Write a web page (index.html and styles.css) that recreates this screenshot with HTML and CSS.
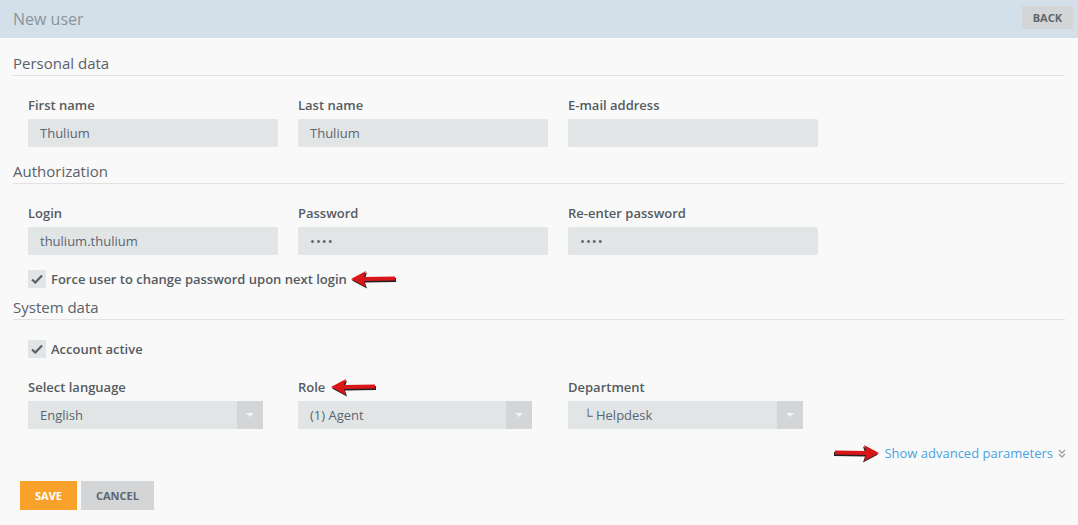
FILE: index.html
```html
<!DOCTYPE html>
<html lang="en">
<head>
    <meta charset="UTF-8">
    <title>New user</title>
    <link rel="stylesheet" href="styles.css">
</head>
<body>

<div class="topbar">
    <h1 class="page-title">New user</h1>
    <button class="btn btn-grey btn-back">BACK</button>
</div>

<form class="user-form">
    <h2 class="section-title section-first">Personal data</h2>
    <div class="row">
        <div class="field">
            <label>First name</label>
            <input type="text" value="Thulium">
        </div>
        <div class="field">
            <label>Last name</label>
            <input type="text" value="Thulium">
        </div>
        <div class="field">
            <label>E-mail address</label>
            <input type="text" value="">
        </div>
    </div>

    <h2 class="section-title">Authorization</h2>
    <div class="row">
        <div class="field">
            <label>Login</label>
            <input type="text" value="thulium.thulium">
        </div>
        <div class="field">
            <label>Password</label>
            <input type="password" value="abcd">
        </div>
        <div class="field">
            <label>Re-enter password</label>
            <input type="password" value="abcd">
        </div>
    </div>
    <div class="check-row check-force">
        <span class="checkbox"><svg width="12" height="10" viewBox="0 0 12 10"><path d="M1 5.5 L4.3 8.5 L11 1.5" fill="none" stroke="#55606a" stroke-width="2.2"/></svg></span>
        <span class="check-label">Force user to change password upon next login</span>
        <svg class="arrow arrow-force" width="48" height="20" viewBox="0 0 48 20"><path d="M2 10 L17 2 L15 8 L46 7.5 L46 11.5 L15 12 L17 18 Z" fill="#222" transform="translate(1,1.5)"/><path d="M2 10 L17 2 L15 8 L46 7.5 L46 11.5 L15 12 L17 18 Z" fill="#d9161a"/></svg>
    </div>

    <h2 class="section-title section-tight">System data</h2>
    <div class="check-row check-active">
        <span class="checkbox"><svg width="12" height="10" viewBox="0 0 12 10"><path d="M1 5.5 L4.3 8.5 L11 1.5" fill="none" stroke="#55606a" stroke-width="2.2"/></svg></span>
        <span class="check-label">Account active</span>
    </div>
    <div class="row row-selects">
        <div class="field">
            <label>Select language</label>
            <div class="select">
                <span class="select-value">English</span>
                <span class="select-arrow"></span>
            </div>
        </div>
        <div class="field">
            <label>Role <svg class="arrow" width="48" height="20" viewBox="0 0 48 20"><path d="M2 10 L17 2 L15 8 L46 7.5 L46 11.5 L15 12 L17 18 Z" fill="#222" transform="translate(1,1.5)"/><path d="M2 10 L17 2 L15 8 L46 7.5 L46 11.5 L15 12 L17 18 Z" fill="#d9161a"/></svg></label>
            <div class="select">
                <span class="select-value">(1) Agent</span>
                <span class="select-arrow"></span>
            </div>
        </div>
        <div class="field">
            <label>Department</label>
            <div class="select">
                <span class="select-value">&nbsp;└ Helpdesk</span>
                <span class="select-arrow"></span>
            </div>
        </div>
    </div>

    <div class="advanced">
        <svg class="arrow" width="48" height="20" viewBox="0 0 48 20"><path d="M46 10 L31 2 L33 8 L2 7.5 L2 11.5 L33 12 L31 18 Z" fill="#222" transform="translate(-1,1.5)"/><path d="M46 10 L31 2 L33 8 L2 7.5 L2 11.5 L33 12 L31 18 Z" fill="#d9161a"/></svg>
        <a href="#" class="advanced-link">Show advanced parameters</a>
        <svg class="chevrons" width="8" height="9" viewBox="0 0 8 9"><path d="M1 1 L4 4 L7 1 M1 5 L4 8 L7 5" fill="none" stroke="#9aa2a8" stroke-width="1.4"/></svg>
    </div>

    <div class="actions">
        <button type="button" class="btn btn-orange">SAVE</button>
        <button type="button" class="btn btn-grey">CANCEL</button>
    </div>
</form>

</body>
</html>
```
FILE: styles.css
```css
body {
    margin: 0;
    background-color: #f9f9f9;
    font-family: 'Open Sans', Arial, sans-serif;
    color: #555b61;
}
.topbar {
    display: flex;
    align-items: center;
    justify-content: space-between;
    height: 38px;
    background-color: #d3e0ea;
    padding: 0 5px 0 13px;
}
.page-title {
    margin: 0;
    font-size: 16px;
    font-weight: 400;
    color: #8a939a;
}
.btn {
    border: none;
    font-family: inherit;
    font-size: 11px;
    font-weight: 700;
    cursor: pointer;
}
.btn-grey {
    background-color: #d3d5d7;
    color: #5b6670;
}
.btn-back {
    height: 23px;
    padding: 0 11px;
    margin-top: -3px;
}
.btn-orange {
    background-color: #f9a22b;
    color: #fff;
}
.user-form {
    padding: 0 13px;
}
.section-title {
    margin: 0;
    padding: 14px 0 2px;
    font-size: 15px;
    font-weight: 400;
    color: #5b6168;
    border-bottom: 1px solid #e2e2e2;
    line-height: 20px;
}
.section-first {
    padding-top: 15px;
}
.section-tight {
    padding-top: 9px;
}
.row {
    display: flex;
    gap: 20px;
    padding: 20px 15px 0;
}
.field {
    width: 250px;
    display: flex;
    flex-direction: column;
}
.field label {
    font-size: 13px;
    font-weight: 600;
    color: #555b61;
    height: 18px;
    line-height: 18px;
    margin-bottom: 5px;
    display: flex;
    align-items: center;
    gap: 4px;
}
.field input {
    height: 28px;
    border: none;
    border-radius: 2px;
    background-color: #e2e5e6;
    padding: 0 12px;
    font-family: inherit;
    font-size: 13px;
    color: #5b6670;
    outline: none;
}
.field input[type=password] {
    letter-spacing: 1px;
}
.check-row {
    display: flex;
    align-items: center;
    gap: 5px;
    padding-left: 15px;
    height: 18px;
}
.check-force {
    margin-top: 15px;
}
.check-active {
    margin-top: 20px;
}
.checkbox {
    width: 18px;
    height: 18px;
    background-color: #e2e5e6;
    display: flex;
    align-items: center;
    justify-content: center;
}
.check-label {
    font-size: 13px;
    font-weight: 600;
    color: #555b61;
}
.arrow {
    flex-shrink: 0;
}
.arrow-force {
    margin-left: -3px;
}
.row-selects .field:nth-child(2) .select {
    width: 234px;
}
.select {
    display: flex;
    width: 235px;
    height: 28px;
    background-color: #e2e5e6;
}
.select-value {
    flex: 1;
    padding-left: 12px;
    line-height: 28px;
    font-size: 13px;
    color: #5b6670;
}
.select-arrow {
    width: 26px;
    background-color: #d3d5d7;
    position: relative;
}
.select-arrow::after {
    content: '';
    position: absolute;
    left: 9px;
    top: 12px;
    border-left: 4px solid transparent;
    border-right: 4px solid transparent;
    border-top: 4px solid #f4f4f4;
}
.advanced {
    display: flex;
    align-items: center;
    justify-content: flex-end;
    gap: 3px;
    margin-top: 14px;
    margin-right: -1px;
}
.advanced-link {
    color: #4aa3df;
    text-decoration: none;
    font-size: 13px;
    margin-right: 2px;
}
.actions {
    display: flex;
    gap: 4px;
    margin-top: 18px;
    margin-left: 7px;
}
.actions .btn {
    height: 29px;
    padding: 0 15px;
}
```
